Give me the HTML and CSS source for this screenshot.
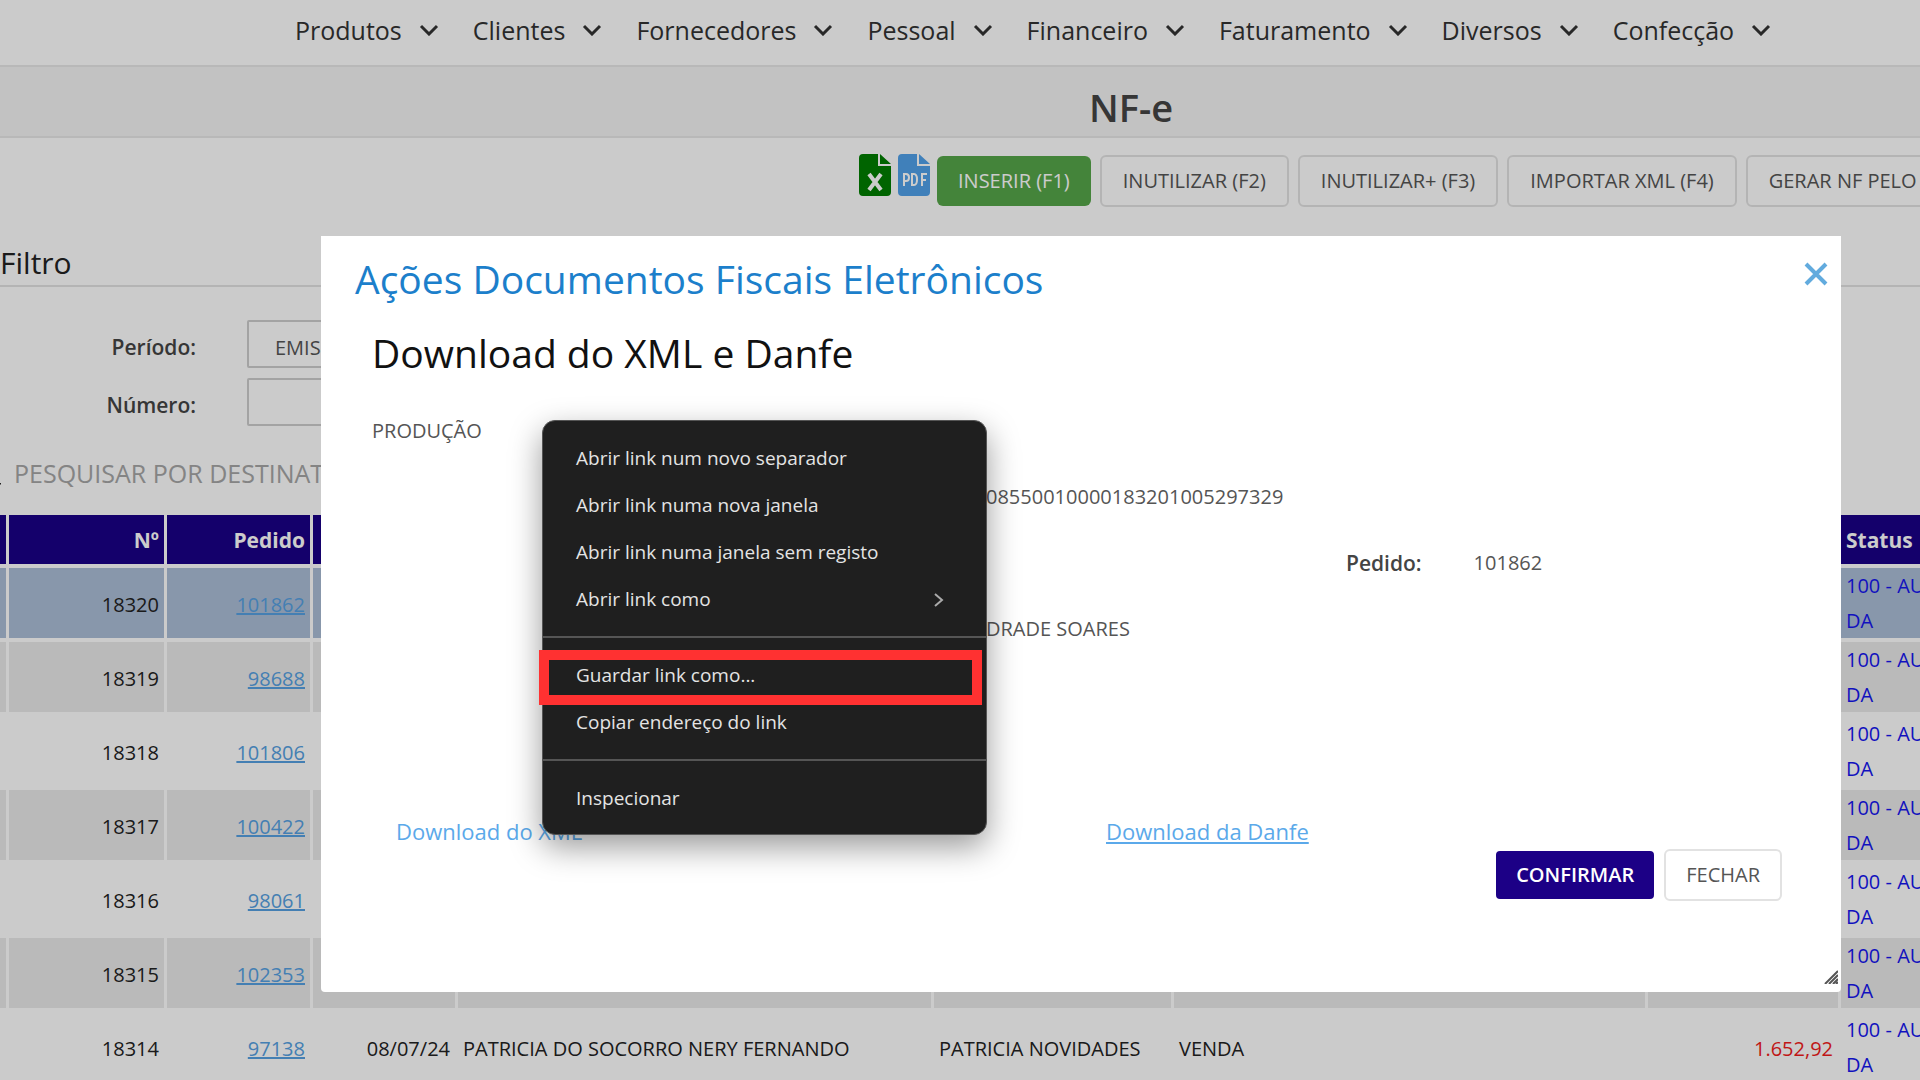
FILE: index.html
```html
<!DOCTYPE html>
<html lang="pt">
<head>
<meta charset="utf-8">
<title>NF-e</title>
<link rel="stylesheet" href="styles.css">
</head>
<body>
<svg class="sprite" aria-hidden="true">
  <symbol id="chevron" viewBox="0 0 20 12"><path d="M2 2l8 8 8-8" fill="none" stroke="currentColor" stroke-width="3"/></symbol>
</svg>
<div class="page">
  <nav class="menu">
    <a href="#">Produtos <svg class="chevron"><use href="#chevron"/></svg></a>
    <a href="#">Clientes <svg class="chevron"><use href="#chevron"/></svg></a>
    <a href="#">Fornecedores <svg class="chevron"><use href="#chevron"/></svg></a>
    <a href="#">Pessoal <svg class="chevron"><use href="#chevron"/></svg></a>
    <a href="#">Financeiro <svg class="chevron"><use href="#chevron"/></svg></a>
    <a href="#">Faturamento <svg class="chevron"><use href="#chevron"/></svg></a>
    <a href="#">Diversos <svg class="chevron"><use href="#chevron"/></svg></a>
    <a href="#">Confecção <svg class="chevron"><use href="#chevron"/></svg></a>
  </nav>
  <header class="title-bar"><h1>NF-e</h1></header>
  <div class="toolbar">
    <button class="file-button excel" aria-label="Excel">
      <svg viewBox="0 0 32 42"><path fill="currentColor" d="M4 0h15v12h13v26a4 4 0 0 1-4 4H4a4 4 0 0 1-4-4V4a4 4 0 0 1 4-4zM21 0l11 10H21z"/><path d="M10 20l12 16M22 20L10 36" stroke="#fff" stroke-width="4" fill="none"/></svg>
    </button>
    <button class="file-button pdf" aria-label="PDF">
      <svg viewBox="0 0 32 42"><path fill="currentColor" d="M4 0h15v12h13v26a4 4 0 0 1-4 4H4a4 4 0 0 1-4-4V4a4 4 0 0 1 4-4zM21 0l11 10H21z"/><path d="M6 32V20h2q3 0 3 3.500t-3 3.500H6M14 20v11h2q3 0 3-5.500T16 20zM24 32V20h5M24 26h4" stroke="#fff" stroke-width="2" fill="none"/></svg>
    </button>
    <button class="button insert">INSERIR (F1)</button>
    <button class="button">INUTILIZAR (F2)</button>
    <button class="button">INUTILIZAR+ (F3)</button>
    <button class="button">IMPORTAR XML (F4)</button>
    <button class="button">GERAR NF PELO ARQUIVO</button>
  </div>
  <section class="filter">
    <h2>Filtro</h2>
    <div class="filter-row">
      <label for="periodo">Período:</label>
      <input id="periodo" type="text" value="EMISSÃO">
    </div>
    <div class="filter-row">
      <label for="numero">Número:</label>
      <input id="numero" type="text">
    </div>
  </section>
  <div class="search">
    <svg viewBox="0 0 24 24"><circle cx="10" cy="10" r="8" fill="none" stroke="currentColor" stroke-width="3"/><path d="M16 16l7 7" stroke="currentColor" stroke-width="4"/></svg>
    <input type="text" aria-label="Pesquisar" placeholder="PESQUISAR POR DESTINATÁRIO">
  </div>
  <table class="invoices">
    <colgroup><col class="c-mark"><col class="c-number"><col class="c-order"><col class="c-date"><col class="c-client"><col class="c-store"><col class="c-kind"><col class="c-total"><col></colgroup>
    <thead>
      <tr><th></th><th class="num">Nº</th><th class="num">Pedido</th><th></th><th></th><th></th><th></th><th></th><th>Status</th></tr>
    </thead>
    <tbody>
      <tr class="selected"><td></td><td class="num">18320</td><td class="num"><a href="#">101862</a></td><td></td><td></td><td></td><td></td><td></td><td class="status">100 - AUTORIZA<br>DA</td></tr>
      <tr class="odd"><td></td><td class="num">18319</td><td class="num"><a href="#">98688</a></td><td></td><td></td><td></td><td></td><td></td><td class="status">100 - AUTORIZA<br>DA</td></tr>
      <tr><td></td><td class="num">18318</td><td class="num"><a href="#">101806</a></td><td></td><td></td><td></td><td></td><td></td><td class="status">100 - AUTORIZA<br>DA</td></tr>
      <tr class="odd"><td></td><td class="num">18317</td><td class="num"><a href="#">100422</a></td><td></td><td></td><td></td><td></td><td></td><td class="status">100 - AUTORIZA<br>DA</td></tr>
      <tr><td></td><td class="num">18316</td><td class="num"><a href="#">98061</a></td><td></td><td></td><td></td><td></td><td></td><td class="status">100 - AUTORIZA<br>DA</td></tr>
      <tr class="odd"><td></td><td class="num">18315</td><td class="num"><a href="#">102353</a></td><td></td><td></td><td></td><td></td><td></td><td class="status">100 - AUTORIZA<br>DA</td></tr>
      <tr><td></td><td class="num">18314</td><td class="num"><a href="#">97138</a></td><td class="num">08/07/24</td><td>PATRICIA DO SOCORRO NERY FERNANDO</td><td>PATRICIA NOVIDADES</td><td>VENDA</td><td class="num debit">1.652,92</td><td class="status">100 - AUTORIZA<br>DA</td></tr>
    </tbody>
  </table>
</div>

<div class="overlay"></div>
<div class="dialog" role="dialog" aria-labelledby="dialog-title">
  <header class="dialog-header">
    <h2 id="dialog-title">Ações Documentos Fiscais Eletrônicos</h2>
    <button class="close" aria-label="Fechar janela"><svg viewBox="0 0 24 24"><path d="M2 2l20 20M22 2L2 22" stroke="currentColor" stroke-width="4"/></svg></button>
  </header>
  <div class="dialog-body">
    <h3>Download do XML e Danfe</h3>
    <div class="details">
      <span class="environment">PRODUÇÃO</span>
      <span class="value">08550010000183201005297329</span>
      <span class="order"><b>Pedido:</b> <span>101862</span></span>
      <span class="value">DRADE SOARES</span>
    </div>
    <div class="links">
      <a class="xml" href="#">Download do XML</a>
      <a href="#">Download da Danfe</a>
    </div>
    <div class="actions">
      <button class="button confirm">CONFIRMAR</button>
      <button class="button">FECHAR</button>
    </div>
  </div>
  <svg class="grip" viewBox="0 0 14 14"><path d="M1 14L14 1M5 14l9-9M9 14l5-5M12 14l2-2" stroke="#555" stroke-width="2"/></svg>

  <div class="context-menu" role="menu">
    <button role="menuitem">Abrir link num novo separador</button>
    <button role="menuitem">Abrir link numa nova janela</button>
    <button role="menuitem">Abrir link numa janela sem registo</button>
    <button role="menuitem">Abrir link como <svg viewBox="0 0 10 16"><path d="M1 2l7 6-7 6" fill="none" stroke="#aaa" stroke-width="2"/></svg></button>
    <hr>
    <button role="menuitem" class="highlighted">Guardar link como...</button>
    <button role="menuitem">Copiar endereço do link</button>
    <hr>
    <button role="menuitem">Inspecionar</button>
  </div>
</div>
</body>
</html>
```
FILE: styles.css
```css
* { box-sizing: border-box; }

body {
  margin: 0;
  height: 100vh;
  overflow: hidden;
  background: #fefefe;
  color: #222;
  font: 20px/35px "Open Sans", "Noto Sans", sans-serif;
}

h1, h2, h3 { margin: 0; font-weight: 400; }
button, input { font: inherit; color: inherit; }
.sprite { display: none; }
.page { overflow: hidden; }

.menu {
  display: flex;
  gap: 34px;
  height: 67px;
  padding: 0 0 5px 295px;
  border-bottom: 2px solid #e6e6e6;
  font-size: 25px;
  line-height: 60px;
}
.menu a {
  display: flex;
  align-items: center;
  gap: 17px;
  color: #333;
  text-decoration: none;
}
.chevron { width: 20px; height: 12px; }

.title-bar {
  height: 71px;
  padding-left: 342px;
  border-bottom: 2px solid #e6e6e6;
  background: #f3f3f3;
  text-align: center;
}
.title-bar h1 {
  color: #444;
  font-size: 38px;
  font-weight: 600;
  line-height: 80px;
}

.toolbar {
  display: flex;
  align-items: center;
  gap: 9px;
  height: 86px;
  padding: 0 0 1px 859px;
}
.button {
  flex: none;
  height: 52px;
  padding: 0 20px;
  border: 2px solid #e2e2e2;
  border-radius: 6px;
  background: #fff;
  color: #555;
  line-height: 48px;
}
.toolbar .button { padding: 0 21px; background: transparent; }
.toolbar .insert {
  height: 50px;
  border: 0;
  background: #56a649;
  color: #fff;
}
.file-button {
  align-self: flex-start;
  width: 32px;
  height: 42px;
  margin: 16px -2px 0 0;
  padding: 0;
  border: 0;
  background: none;
}
.file-button svg { display: block; width: 32px; height: 42px; }
.excel { color: #007d00; }
.pdf { color: #50a0e9; }

.filter h2 {
  height: 63px;
  margin-bottom: 33px;
  border-bottom: 2px solid #e2e2e2;
  font-size: 30px;
  line-height: 78px;
}
.filter-row { display: flex; align-items: center; margin-bottom: 10px; }
.filter-row label {
  width: 196px;
  margin-right: 51px;
  padding-top: 6px;
  color: #444;
  font-size: 21px;
  font-weight: 600;
  line-height: 42px;
  text-align: right;
}
.filter-row input {
  height: 48px;
  padding: 6px 26px 0;
  border: 2px solid #ccc;
  border-radius: 2px;
  background: transparent;
  color: #555;
}

.search {
  display: flex;
  align-items: center;
  height: 79px;
  margin-left: -23px;
  padding-bottom: 4px;
}
.search svg { width: 24px; height: 24px; }
.search input {
  width: 500px;
  margin-left: 11px;
  border: 0;
  background: none;
  font-size: 25px;
}
.search input::placeholder { color: #a5a5a5; }

.invoices {
  width: 100%;
  border-collapse: separate;
  border-spacing: 0;
  table-layout: fixed;
}
.invoices th, .invoices td {
  height: 74px;
  padding: 2px 5px 0;
  border-right: 3px solid #fefefe;
  border-bottom: 4px solid #fefefe;
  overflow: hidden;
  white-space: nowrap;
}
.invoices th:last-child, .invoices td:last-child { border-right: 0; }
.invoices th {
  height: 53px;
  padding-top: 0;
  background: #190086;
  color: #fff;
  font-size: 21px;
  font-weight: 700;
  line-height: 30px;
  text-align: left;
}
.invoices .num { text-align: right; }
.invoices a { color: #559fe0; }
.invoices .selected td { background: #abbdd6; }
.invoices .odd td { background: #e9e9e9; }
.invoices .status { padding-top: 0; color: #1616ee; }
.invoices .debit { color: #f01c1c; }
.c-mark { width: 9px; }
.c-number { width: 158px; }
.c-order { width: 146px; }
.c-date { width: 145px; }
.c-client { width: 476px; }
.c-store { width: 240px; }
.c-kind { width: 474px; }
.c-total { width: 193px; }

.overlay { position: fixed; inset: 0; background: rgba(0, 0, 0, .2); }

.dialog {
  position: fixed;
  top: 236px;
  left: 321px;
  right: 79px;
  border-radius: 0 0 4px 4px;
  background: #fff;
}
.dialog-header {
  display: flex;
  justify-content: space-between;
  align-items: flex-start;
  height: 84px;
  padding: 16px 13px 0 34px;
}
.dialog-header h2 { color: #1c7fcb; font-size: 39px; line-height: 54px; }
.close {
  margin-top: 10px;
  padding: 0;
  border: 0;
  background: none;
  color: #62abde;
}
.close svg { display: block; width: 24px; height: 24px; }

.dialog-body { padding: 0 59px 91px 51px; color: #555; }
.dialog-body h3 { height: 78px; color: #111; font-size: 39px; line-height: 66px; }
.details { display: grid; line-height: 66px; }
.details .value { padding-left: 614px; }
.details .order { display: flex; gap: 52px; padding-left: 974px; }
.details b { color: #444; font-size: 21px; font-weight: 600; }
.links {
  display: flex;
  margin-top: 152px;
  padding-left: 24px;
  font-size: 22px;
}
.links a { flex: none; width: 710px; color: #5ba9ea; }
.links .xml { text-decoration: none; }
.actions { display: flex; justify-content: flex-end; gap: 8px; }
.confirm { border-color: #fff; background: #1c0086; color: #fff; font-weight: 600; }

.grip { position: absolute; right: 3px; bottom: 8px; width: 14px; height: 14px; }

.context-menu {
  position: absolute;
  top: 184px;
  left: 221px;
  width: 445px;
  padding: 14px 0 12px;
  border: 1px solid #555;
  border-radius: 13px;
  background: #1f1f1f;
  box-shadow: 0 12px 32px rgba(0, 0, 0, .4);
}
.context-menu button {
  position: relative;
  display: flex;
  justify-content: space-between;
  align-items: center;
  width: 100%;
  height: 47px;
  padding: 0 42px 0 33px;
  border: 0;
  background: none;
  color: #e4e4e4;
  font-size: 19px;
  font-weight: 500;
}
.context-menu svg { width: 10px; height: 16px; }
.context-menu hr { margin: 13px 0 14px; border: 0; border-top: 2px solid #555; }
.highlighted::after {
  content: "";
  position: absolute;
  inset: -2px 4px -6px -4px;
  border: 10px solid #ff3131;
}
```
